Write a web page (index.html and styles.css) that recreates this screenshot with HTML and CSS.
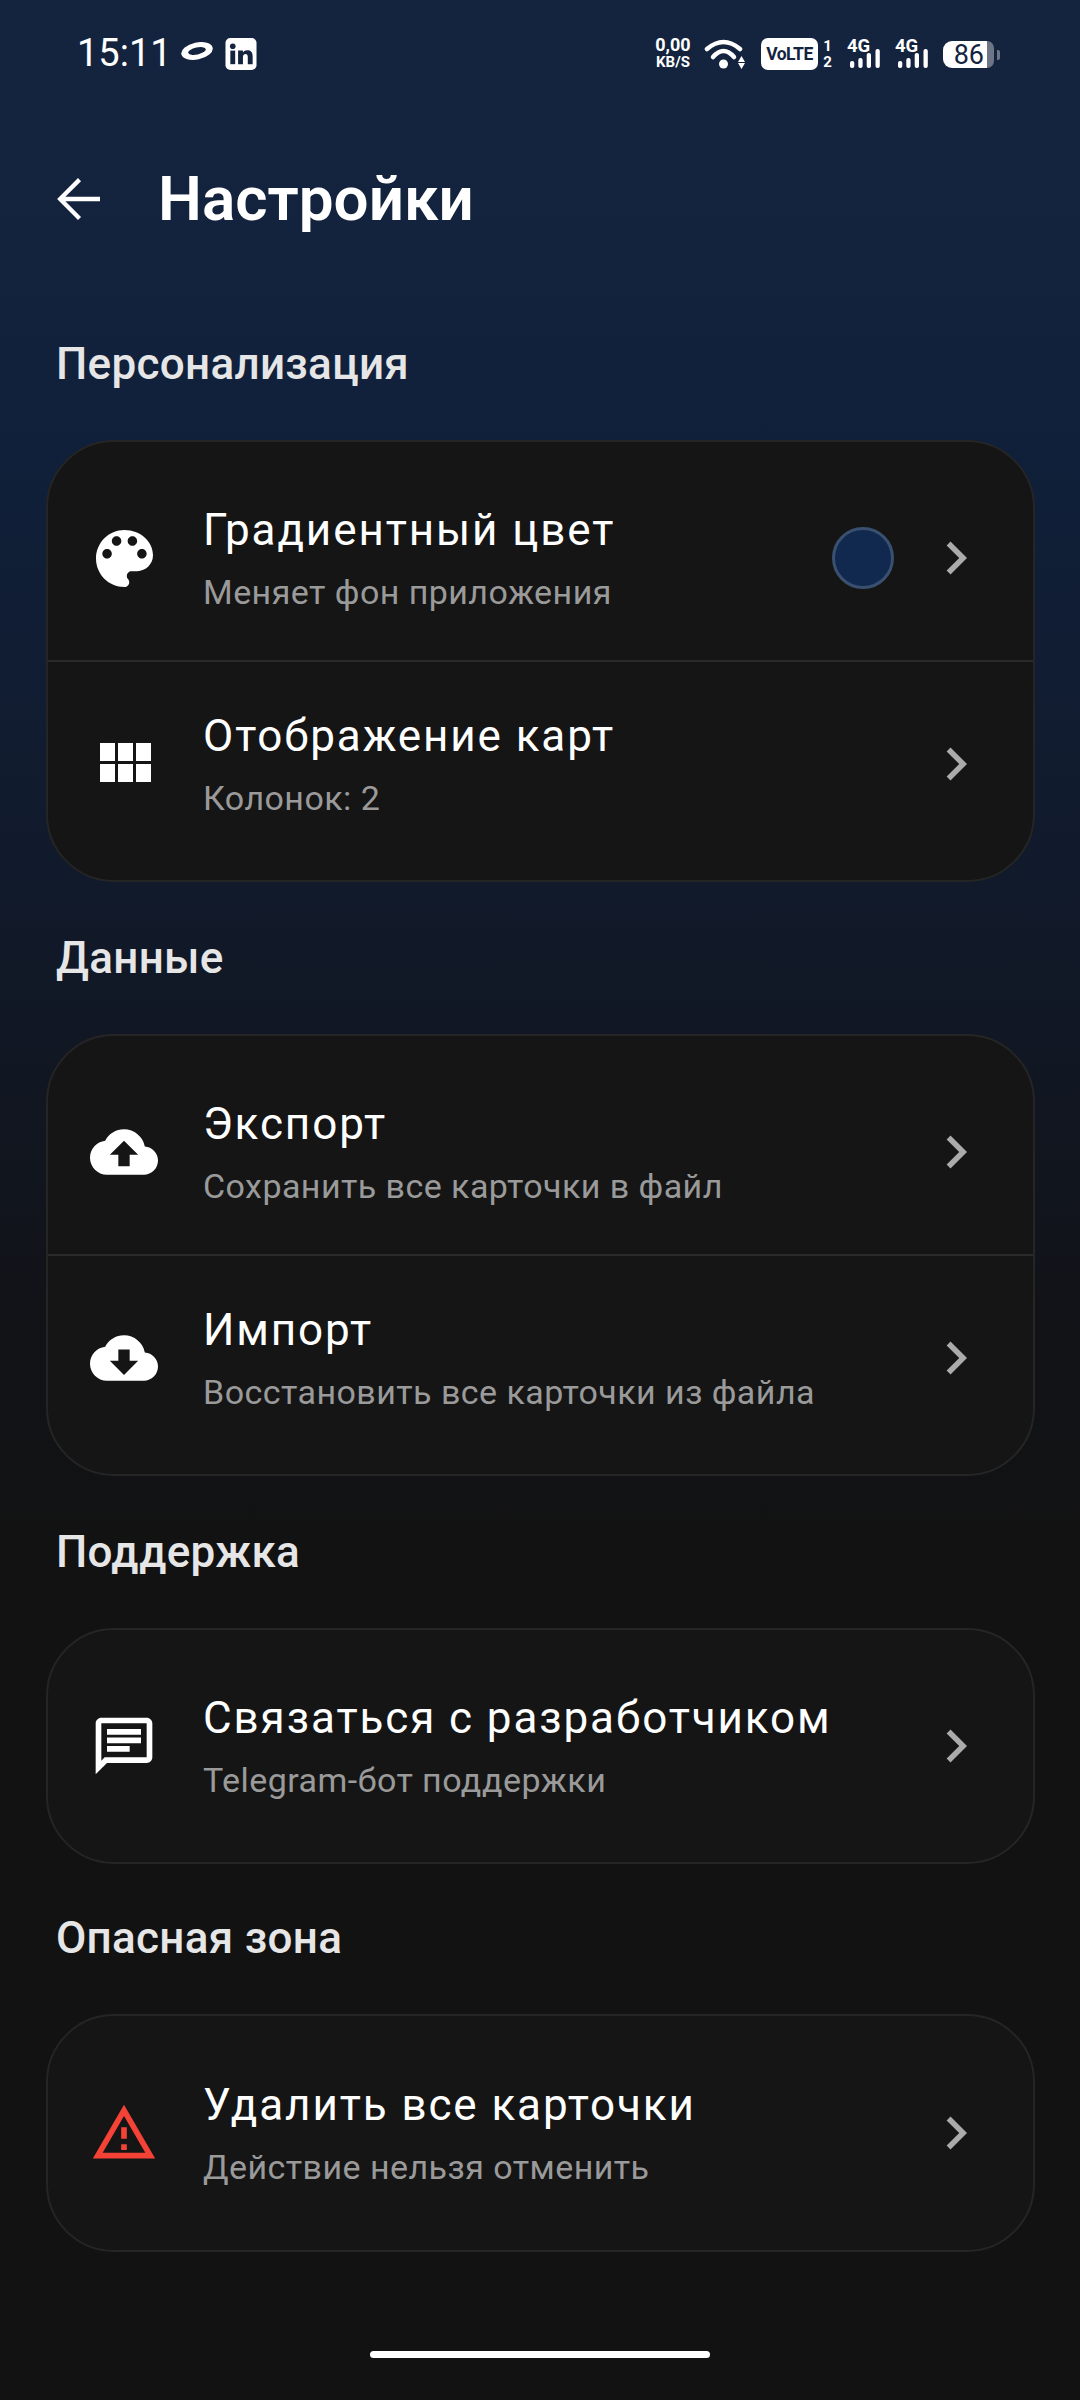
FILE: index.html
```html
<!DOCTYPE html>
<html lang="ru">
<head>
    <meta charset="UTF-8">
    <title>Настройки</title>
    <meta name="viewport" content="width=device-width, initial-scale=1.0">
    <link rel="stylesheet" href="styles.css">
</head>
<body>
    <div class="status-bar">
        <div class="status-left">
            <span class="clock">15:11</span>
            <svg class="halo" viewBox="0 0 34 20"><path fill-rule="evenodd" transform="rotate(-12 17 10)" d="M1 10a16 8.500 0 1 0 32 0a16 8.500 0 1 0-32 0zM8 10a9 3.500 0 1 1 18 0a9 3.500 0 1 1-18 0z" fill="#fff"/></svg>
            <svg class="linkedin" viewBox="0 0 32 33"><rect width="32" height="33" rx="5" fill="#fff"/><rect x="5" y="13" width="5" height="14" fill="#14243f"/><circle cx="7.500" cy="8.500" r="2.900" fill="#14243f"/><path d="M13 13h5v2c1-1.500 2.500-2.400 4.500-2.400 3.500 0 5.500 2 5.500 6V27h-5v-7.500c0-2-.8-3-2.300-3s-2.700 1-2.700 3V27h-5z" fill="#14243f"/></svg>
        </div>
        <div class="status-right">
            <div class="net-speed"><span>0,00</span><span>KB/S</span></div>
            <svg class="wifi" viewBox="0 0 41 31"><path d="M3 11Q19.500-3 36 11" fill="none" stroke="#fff" stroke-width="4.500" stroke-linecap="round"/><path d="M9 19Q19.500 7 30 19" fill="none" stroke="#fff" stroke-width="4.500" stroke-linecap="round"/><circle cx="19.500" cy="26" r="4.500" fill="#fff"/><path d="M37.500 18l3.500 6h-7zM37.500 31l-3.500-6h7z" fill="#fff"/></svg>
            <span class="volte">VoLTE</span>
            <div class="sim-nums"><span>1</span><span>2</span></div>
            <div class="signal">
                <span class="signal-type">4G</span>
                <svg class="signal-bars" viewBox="0 0 30 19"><rect x="0" y="12" width="4.300" height="7" rx="2"/><rect x="8.300" y="9" width="4.300" height="10" rx="2"/><rect x="16.700" y="4" width="4.300" height="15" rx="2"/><rect x="25.500" y="0" width="4.300" height="19" rx="2"/></svg>
            </div>
            <div class="signal">
                <span class="signal-type">4G</span>
                <svg class="signal-bars" viewBox="0 0 30 19"><rect x="0" y="12" width="4.300" height="7" rx="2"/><rect x="8.300" y="9" width="4.300" height="10" rx="2"/><rect x="16.700" y="4" width="4.300" height="15" rx="2"/><rect x="25.500" y="0" width="4.300" height="19" rx="2"/></svg>
            </div>
            <div class="battery">
                <div class="battery-body"><span class="battery-level">86</span><span class="battery-rest"></span></div>
                <span class="battery-nub"></span>
            </div>
        </div>
    </div>

    <header class="top-bar">
        <svg class="back-icon" viewBox="0 0 24 24"><path d="M20 11.200H7.400l5.700-5.700L12 4.400 4.400 12l7.600 7.600 1.100-1.100-5.700-5.700H20z"/></svg>
        <h1>Настройки</h1>
    </header>

    <main>
        <h2 class="section-title">Персонализация</h2>
        <section class="card">
            <div class="row">
                <div class="row-icon"><svg class="icon-palette" viewBox="3 3 18 18"><path d="M12 3c-4.970 0-9 4.030-9 9s4.030 9 9 9c.83 0 1.500-.67 1.500-1.500 0-.39-.15-.74-.39-1.010-.23-.26-.38-.61-.38-.99 0-.83.67-1.500 1.500-1.500H16c2.760 0 5-2.240 5-5 0-4.420-4.030-8-9-8zm-5.500 9c-.83 0-1.500-.67-1.500-1.500S5.670 9 6.500 9 8 9.670 8 10.500 7.330 12 6.500 12zm3-4C8.670 8 8 7.330 8 6.500S8.670 5 9.500 5s1.500.67 1.500 1.500S10.330 8 9.500 8zm5 0c-.83 0-1.500-.67-1.500-1.500S13.670 5 14.500 5s1.500.67 1.500 1.500S15.330 8 14.500 8zm3 4c-.83 0-1.500-.67-1.500-1.500S16.670 9 17.500 9s1.500.67 1.500 1.500-.67 1.500-1.500 1.500z"/></svg></div>
                <div class="row-text">
                    <div class="row-title">Градиентный цвет</div>
                    <div class="row-sub">Меняет фон приложения</div>
                </div>
                <span class="swatch"></span>
                <svg class="chevron" viewBox="0 0 24 24"><path d="M10 6L8.590 7.410 13.170 12l-4.580 4.590L10 18l6-6z"/></svg>
            </div>
            <div class="divider"></div>
            <div class="row">
                <div class="row-icon"><svg class="icon-grid" viewBox="0 0 24 24"><path d="M4 11h5V5H4v6zm0 7h5v-6H4v6zm6 0h5v-6h-5v6zm6 0h5v-6h-5v6zm-6-7h5V5h-5v6zm6-6v6h5V5h-5z"/></svg></div>
                <div class="row-text">
                    <div class="row-title">Отображение карт</div>
                    <div class="row-sub">Колонок: 2</div>
                </div>
                <svg class="chevron" viewBox="0 0 24 24"><path d="M10 6L8.590 7.410 13.170 12l-4.580 4.590L10 18l6-6z"/></svg>
            </div>
        </section>

        <h2 class="section-title">Данные</h2>
        <section class="card">
            <div class="row">
                <div class="row-icon"><svg class="icon-std" viewBox="0 0 24 24"><path d="M19.350 10.040C18.670 6.590 15.640 4 12 4 9.110 4 6.600 5.640 5.350 8.040 2.340 8.360 0 10.910 0 14c0 3.310 2.690 6 6 6h13c2.760 0 5-2.240 5-5 0-2.640-2.050-4.780-4.650-4.960zM14 13v4h-4v-4H7l5-5 5 5h-3z"/></svg></div>
                <div class="row-text">
                    <div class="row-title">Экспорт</div>
                    <div class="row-sub">Сохранить все карточки в файл</div>
                </div>
                <svg class="chevron" viewBox="0 0 24 24"><path d="M10 6L8.590 7.410 13.170 12l-4.580 4.590L10 18l6-6z"/></svg>
            </div>
            <div class="divider"></div>
            <div class="row">
                <div class="row-icon"><svg class="icon-std" viewBox="0 0 24 24"><path d="M19.350 10.040C18.670 6.590 15.640 4 12 4 9.110 4 6.600 5.640 5.350 8.040 2.340 8.360 0 10.910 0 14c0 3.310 2.690 6 6 6h13c2.760 0 5-2.240 5-5 0-2.640-2.050-4.780-4.650-4.960zM17 13l-5 5-5-5h3V9h4v4h3z"/></svg></div>
                <div class="row-text">
                    <div class="row-title">Импорт</div>
                    <div class="row-sub">Восстановить все карточки из файла</div>
                </div>
                <svg class="chevron" viewBox="0 0 24 24"><path d="M10 6L8.590 7.410 13.170 12l-4.580 4.590L10 18l6-6z"/></svg>
            </div>
        </section>

        <h2 class="section-title">Поддержка</h2>
        <section class="card">
            <div class="row">
                <div class="row-icon"><svg class="icon-std" viewBox="0 0 24 24"><path d="M4 4h16v12H5.170L4 17.170V4m0-2c-1.100 0-1.990.9-1.990 2L2 22l4-4h14c1.100 0 2-.9 2-2V4c0-1.100-.9-2-2-2H4zm2 10h8v2H6v-2zm0-3h12v2H6V9zm0-3h12v2H6V6z"/></svg></div>
                <div class="row-text">
                    <div class="row-title">Связаться с разработчиком</div>
                    <div class="row-sub">Telegram-бот поддержки</div>
                </div>
                <svg class="chevron" viewBox="0 0 24 24"><path d="M10 6L8.590 7.410 13.170 12l-4.580 4.590L10 18l6-6z"/></svg>
            </div>
        </section>

        <h2 class="section-title section-title-last">Опасная зона</h2>
        <section class="card card-last">
            <div class="row">
                <div class="row-icon"><svg class="icon-std icon-danger" viewBox="0 0 24 24"><path d="M12 5.990L19.530 19H4.470L12 5.990M12 2L1 21h22L12 2zm1 14h-2v2h2v-2zm0-6h-2v4h2v-4z"/></svg></div>
                <div class="row-text">
                    <div class="row-title">Удалить все карточки</div>
                    <div class="row-sub">Действие нельзя отменить</div>
                </div>
                <svg class="chevron" viewBox="0 0 24 24"><path d="M10 6L8.590 7.410 13.170 12l-4.580 4.590L10 18l6-6z"/></svg>
            </div>
        </section>
    </main>

    <div class="home-bar"></div>
</body>
</html>
```

FILE: styles.css
```css
* {
    box-sizing: border-box;
}

html, body {
    margin: 0;
    height: 2400px;
}

body {
    position: relative;
    font-family: Roboto, "Noto Sans", sans-serif;
    color: #fff;
    background: linear-gradient(180deg, #14243f 0, #13233d 260px, #10203a 440px, #111a2b 880px, #111318 1300px, #121212 1560px);
}

/* status bar */
.status-bar {
    height: 106px;
    display: flex;
    justify-content: space-between;
    align-items: flex-start;
    padding: 0 80px 0 77px;
}

.status-left {
    display: flex;
    align-items: center;
    height: 106px;
}

.clock {
    font-size: 38px;
}

.halo {
    width: 34px;
    height: 20px;
    margin: 0 0 5px 8px;
}

.linkedin {
    width: 32px;
    height: 32px;
    margin: 2px 0 0 11px;
}

.status-right {
    display: flex;
    align-items: flex-start;
    padding-top: 37px;
}

.net-speed {
    width: 36px;
    margin-top: -2px;
    display: flex;
    flex-direction: column;
    font-size: 15px;
    line-height: 17px;
    font-weight: 700;
    text-align: center;
    white-space: nowrap;
}

.net-speed span:first-child {
    font-size: 18px;
    line-height: 19px;
}

.wifi {
    width: 41px;
    height: 31px;
    margin: 1px 0 0 13px;
    flex: none;
}

.volte {
    width: 57px;
    height: 32px;
    margin: 1px 0 0 16px;
    background: #fff;
    border-radius: 7px;
    color: #14243f;
    font-size: 17.500px;
    line-height: 32px;
    font-weight: 700;
    text-align: center;
    letter-spacing: -0.5px;
}

.sim-nums {
    width: 9px;
    margin: 1px 0 0 5px;
    display: flex;
    flex-direction: column;
    font-size: 15px;
    line-height: 16px;
    font-weight: 700;
    text-align: center;
}

.signal {
    position: relative;
    width: 33px;
    height: 31px;
    margin-left: 15px;
}

.signal-type {
    position: absolute;
    left: 0;
    top: 0;
    font-size: 18.500px;
    line-height: 18px;
    font-weight: 700;
}

.signal-bars {
    position: absolute;
    right: 0;
    bottom: 0;
    width: 30px;
    height: 19px;
    fill: #fff;
}

.battery {
    display: flex;
    align-items: center;
    height: 27px;
    margin: 4px 0 0 15px;
}

.battery-body {
    display: flex;
    width: 51px;
    height: 27px;
}

.battery-level {
    width: 44px;
    padding-right: 3px;
    background: #fff;
    border-radius: 9px 0 0 9px;
    color: #14243f;
    font-size: 27px;
    line-height: 29px;
    text-align: right;
}

.battery-rest {
    flex: 1;
    background: #6c7485;
    border-radius: 0 7px 7px 0;
}

.battery-nub {
    width: 3px;
    height: 10px;
    margin-left: 3px;
    border-radius: 0 2px 2px 0;
    background: #6c7485;
}

/* top bar */
.top-bar {
    height: 186px;
    display: flex;
    align-items: flex-start;
    padding: 60px 0 0 45px;
}

.back-icon {
    width: 66px;
    height: 66px;
    fill: #fff;
    flex: none;
}

h1 {
    margin: 0 0 0 47px;
    font-size: 62px;
    line-height: 66px;
    font-weight: 600;
}

/* sections */
main {
    padding: 48px 45px 0 46px;
}

.section-title {
    margin: 0 0 52px 10px;
    font-size: 44px;
    line-height: 48px;
    font-weight: 500;
    color: #e6e6e6;
    letter-spacing: 0.3px;
}

.section-title-last {
    margin-top: -2px;
}

.card {
    margin-bottom: 52px;
    padding: 14px 0;
    background: #151515;
    border: 2px solid #252525;
    border-radius: 68px;
}

.card-last {
    padding: 15px 0;
}

.divider {
    height: 2px;
    background: #2a2a2a;
}

.row {
    height: 204px;
    display: flex;
    align-items: center;
    padding: 0 44px 0 36px;
}

.row-icon {
    width: 80px;
    height: 80px;
    margin-right: 39px;
    display: flex;
    align-items: center;
    justify-content: center;
    flex: none;
}

.row-icon svg {
    fill: #fff;
}

.icon-palette {
    width: 57px;
    height: 57px;
}

.icon-grid {
    width: 72px;
    height: 72px;
}

.icon-std {
    width: 68px;
    height: 68px;
}

.row-icon .icon-danger {
    fill: #f44336;
}

.row-text {
    flex: 1;
}

.row-title {
    font-size: 44px;
    line-height: 58px;
    letter-spacing: 1.9px;
    color: #fff;
}

.row-sub {
    margin-top: 10px;
    font-size: 34px;
    line-height: 46px;
    letter-spacing: 0.45px;
    color: #9a9a9a;
}

.swatch {
    width: 62px;
    height: 62px;
    margin-right: 29px;
    border-radius: 50%;
    background: #12294f;
    border: 3px solid #3a5070;
    flex: none;
}

.chevron {
    width: 66px;
    height: 66px;
    fill: #ababab;
    flex: none;
}

.home-bar {
    position: absolute;
    left: 370px;
    top: 2351px;
    width: 340px;
    height: 7px;
    border-radius: 4px;
    background: #fff;
}
```
